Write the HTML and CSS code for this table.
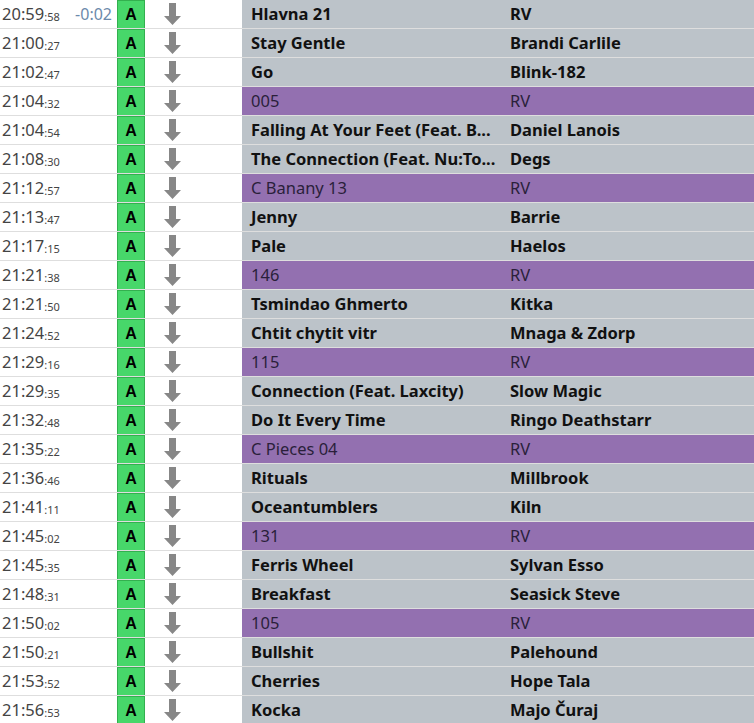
FILE: index.html
```html
<!DOCTYPE html>
<html>
<head>
<meta charset="utf-8">
<link rel="stylesheet" href="styles.css">
</head>
<body>
<div class="list">
  <div class="row"><div class="time">20:59<small>:58</small><span class="delta">-0:02</span></div><div class="st"><span>A</span></div><div class="arr"><svg viewBox="0 0 17 22" width="17" height="22"><path d="M5 0h7v13h5l-8.5 9-8.5-9h5z"/></svg></div><div class="title">Hlavna 21</div><div class="artist">RV</div></div>
  <div class="row"><div class="time">21:00<small>:27</small></div><div class="st"><span>A</span></div><div class="arr"><svg viewBox="0 0 17 22" width="17" height="22"><path d="M5 0h7v13h5l-8.5 9-8.5-9h5z"/></svg></div><div class="title">Stay Gentle</div><div class="artist">Brandi Carlile</div></div>
  <div class="row"><div class="time">21:02<small>:47</small></div><div class="st"><span>A</span></div><div class="arr"><svg viewBox="0 0 17 22" width="17" height="22"><path d="M5 0h7v13h5l-8.5 9-8.5-9h5z"/></svg></div><div class="title">Go</div><div class="artist">Blink-182</div></div>
  <div class="row jingle"><div class="time">21:04<small>:32</small></div><div class="st"><span>A</span></div><div class="arr"><svg viewBox="0 0 17 22" width="17" height="22"><path d="M5 0h7v13h5l-8.5 9-8.5-9h5z"/></svg></div><div class="title">005</div><div class="artist">RV</div></div>
  <div class="row"><div class="time">21:04<small>:54</small></div><div class="st"><span>A</span></div><div class="arr"><svg viewBox="0 0 17 22" width="17" height="22"><path d="M5 0h7v13h5l-8.5 9-8.5-9h5z"/></svg></div><div class="title">Falling At Your Feet (Feat. B...</div><div class="artist">Daniel Lanois</div></div>
  <div class="row"><div class="time">21:08<small>:30</small></div><div class="st"><span>A</span></div><div class="arr"><svg viewBox="0 0 17 22" width="17" height="22"><path d="M5 0h7v13h5l-8.5 9-8.5-9h5z"/></svg></div><div class="title">The Connection (Feat. Nu:To...</div><div class="artist">Degs</div></div>
  <div class="row jingle"><div class="time">21:12<small>:57</small></div><div class="st"><span>A</span></div><div class="arr"><svg viewBox="0 0 17 22" width="17" height="22"><path d="M5 0h7v13h5l-8.5 9-8.5-9h5z"/></svg></div><div class="title">C Banany 13</div><div class="artist">RV</div></div>
  <div class="row"><div class="time">21:13<small>:47</small></div><div class="st"><span>A</span></div><div class="arr"><svg viewBox="0 0 17 22" width="17" height="22"><path d="M5 0h7v13h5l-8.5 9-8.5-9h5z"/></svg></div><div class="title">Jenny</div><div class="artist">Barrie</div></div>
  <div class="row"><div class="time">21:17<small>:15</small></div><div class="st"><span>A</span></div><div class="arr"><svg viewBox="0 0 17 22" width="17" height="22"><path d="M5 0h7v13h5l-8.5 9-8.5-9h5z"/></svg></div><div class="title">Pale</div><div class="artist">Haelos</div></div>
  <div class="row jingle"><div class="time">21:21<small>:38</small></div><div class="st"><span>A</span></div><div class="arr"><svg viewBox="0 0 17 22" width="17" height="22"><path d="M5 0h7v13h5l-8.5 9-8.5-9h5z"/></svg></div><div class="title">146</div><div class="artist">RV</div></div>
  <div class="row"><div class="time">21:21<small>:50</small></div><div class="st"><span>A</span></div><div class="arr"><svg viewBox="0 0 17 22" width="17" height="22"><path d="M5 0h7v13h5l-8.5 9-8.5-9h5z"/></svg></div><div class="title">Tsmindao Ghmerto</div><div class="artist">Kitka</div></div>
  <div class="row"><div class="time">21:24<small>:52</small></div><div class="st"><span>A</span></div><div class="arr"><svg viewBox="0 0 17 22" width="17" height="22"><path d="M5 0h7v13h5l-8.5 9-8.5-9h5z"/></svg></div><div class="title">Chtit chytit vitr</div><div class="artist">Mnaga &amp; Zdorp</div></div>
  <div class="row jingle"><div class="time">21:29<small>:16</small></div><div class="st"><span>A</span></div><div class="arr"><svg viewBox="0 0 17 22" width="17" height="22"><path d="M5 0h7v13h5l-8.5 9-8.5-9h5z"/></svg></div><div class="title">115</div><div class="artist">RV</div></div>
  <div class="row"><div class="time">21:29<small>:35</small></div><div class="st"><span>A</span></div><div class="arr"><svg viewBox="0 0 17 22" width="17" height="22"><path d="M5 0h7v13h5l-8.5 9-8.5-9h5z"/></svg></div><div class="title">Connection (Feat. Laxcity)</div><div class="artist">Slow Magic</div></div>
  <div class="row"><div class="time">21:32<small>:48</small></div><div class="st"><span>A</span></div><div class="arr"><svg viewBox="0 0 17 22" width="17" height="22"><path d="M5 0h7v13h5l-8.5 9-8.5-9h5z"/></svg></div><div class="title">Do It Every Time</div><div class="artist">Ringo Deathstarr</div></div>
  <div class="row jingle"><div class="time">21:35<small>:22</small></div><div class="st"><span>A</span></div><div class="arr"><svg viewBox="0 0 17 22" width="17" height="22"><path d="M5 0h7v13h5l-8.5 9-8.5-9h5z"/></svg></div><div class="title">C Pieces 04</div><div class="artist">RV</div></div>
  <div class="row"><div class="time">21:36<small>:46</small></div><div class="st"><span>A</span></div><div class="arr"><svg viewBox="0 0 17 22" width="17" height="22"><path d="M5 0h7v13h5l-8.5 9-8.5-9h5z"/></svg></div><div class="title">Rituals</div><div class="artist">Millbrook</div></div>
  <div class="row"><div class="time">21:41<small>:11</small></div><div class="st"><span>A</span></div><div class="arr"><svg viewBox="0 0 17 22" width="17" height="22"><path d="M5 0h7v13h5l-8.5 9-8.5-9h5z"/></svg></div><div class="title">Oceantumblers</div><div class="artist">Kiln</div></div>
  <div class="row jingle"><div class="time">21:45<small>:02</small></div><div class="st"><span>A</span></div><div class="arr"><svg viewBox="0 0 17 22" width="17" height="22"><path d="M5 0h7v13h5l-8.5 9-8.5-9h5z"/></svg></div><div class="title">131</div><div class="artist">RV</div></div>
  <div class="row"><div class="time">21:45<small>:35</small></div><div class="st"><span>A</span></div><div class="arr"><svg viewBox="0 0 17 22" width="17" height="22"><path d="M5 0h7v13h5l-8.5 9-8.5-9h5z"/></svg></div><div class="title">Ferris Wheel</div><div class="artist">Sylvan Esso</div></div>
  <div class="row"><div class="time">21:48<small>:31</small></div><div class="st"><span>A</span></div><div class="arr"><svg viewBox="0 0 17 22" width="17" height="22"><path d="M5 0h7v13h5l-8.5 9-8.5-9h5z"/></svg></div><div class="title">Breakfast</div><div class="artist">Seasick Steve</div></div>
  <div class="row jingle"><div class="time">21:50<small>:02</small></div><div class="st"><span>A</span></div><div class="arr"><svg viewBox="0 0 17 22" width="17" height="22"><path d="M5 0h7v13h5l-8.5 9-8.5-9h5z"/></svg></div><div class="title">105</div><div class="artist">RV</div></div>
  <div class="row"><div class="time">21:50<small>:21</small></div><div class="st"><span>A</span></div><div class="arr"><svg viewBox="0 0 17 22" width="17" height="22"><path d="M5 0h7v13h5l-8.5 9-8.5-9h5z"/></svg></div><div class="title">Bullshit</div><div class="artist">Palehound</div></div>
  <div class="row"><div class="time">21:53<small>:52</small></div><div class="st"><span>A</span></div><div class="arr"><svg viewBox="0 0 17 22" width="17" height="22"><path d="M5 0h7v13h5l-8.5 9-8.5-9h5z"/></svg></div><div class="title">Cherries</div><div class="artist">Hope Tala</div></div>
  <div class="row"><div class="time">21:56<small>:53</small></div><div class="st"><span>A</span></div><div class="arr"><svg viewBox="0 0 17 22" width="17" height="22"><path d="M5 0h7v13h5l-8.5 9-8.5-9h5z"/></svg></div><div class="title">Kocka</div><div class="artist">Majo Čuraj</div></div>
</div>
</body>
</html>
```

FILE: styles.css
```css
html, body {
  margin: 0;
  padding: 0;
  background: #ffffff;
  overflow: hidden;
}
body {
  font-family: "Noto Sans", "Open Sans", sans-serif;
  font-size: 16px;
  color: #222;
}
.list {
  display: flex;
  flex-direction: column;
}
.row {
  display: grid;
  grid-template-columns: 117px 28px 97px 259px 1fr;
  height: 28px;
  border-bottom: 1px solid #dedede;
}
.time {
  display: flex;
  align-items: center;
  padding-left: 2px;
  padding-bottom: 1px;
  color: #444;
  font-size: 16.5px;
  white-space: nowrap;
}
.time small {
  font-size: 11px;
  margin-top: 5px;
}
.delta {
  margin-left: auto;
  padding-right: 5px;
  color: #6c8aab;
  font-size: 16px;
}
.st {
  background: #47d76a;
  border: 1px solid #33b04f;
  border-bottom: none;
  display: flex;
  align-items: center;
  justify-content: center;
  font-family: "Liberation Sans", Arial, sans-serif;
  font-weight: bold;
  font-size: 16px;
  color: #000;
}
.arr {
  display: flex;
  align-items: center;
  padding-left: 19px;
}
.arr svg {
  fill: #878787;
}
.title, .artist {
  background: #bcc3c9;
  display: flex;
  align-items: center;
  font-weight: bold;
  font-size: 16.5px;
  white-space: nowrap;
  overflow: hidden;
  color: #111;
  padding-left: 9px;
  padding-bottom: 2px;
  box-sizing: border-box;
}
.jingle .title, .jingle .artist {
  background: #9370b0;
  font-weight: normal;
  color: #2a1f3a;
}
```
